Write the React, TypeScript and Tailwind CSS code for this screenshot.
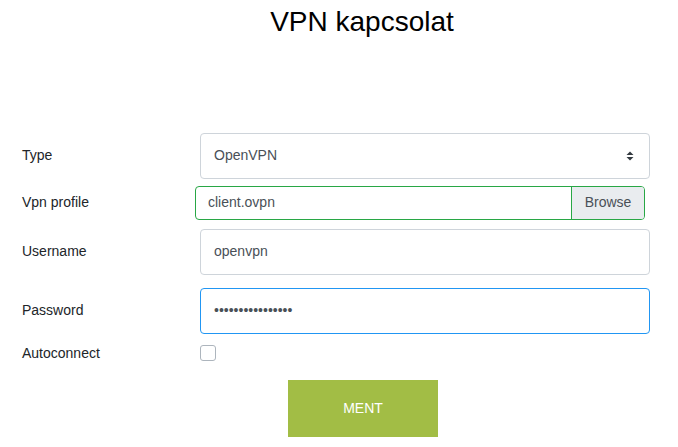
import { useState } from "react";

// ─── Row: label column + control column ───
function Row({ label, children, className = "" }: { label: string; children: React.ReactNode; className?: string }) {
  return (
    <div className={`flex items-center ${className}`}>
      <label className="w-[200px] shrink-0 pl-[22px] text-[14px] text-[#212529]">{label}</label>
      <div className="w-[450px]">{children}</div>
    </div>
  );
}

export default function App() {
  const [auto, setAuto] = useState(false);

  return (
    <div className="min-h-screen bg-white font-['Liberation_Sans',Arial,sans-serif] text-[#212529]">
      <h1 className="pt-[5px] text-center pl-[46px] text-[28px] leading-[1.2] font-normal text-black">
        VPN kapcsolat
      </h1>

      <form className="mt-[94px] flex flex-col" onSubmit={(e) => e.preventDefault()}>
        {/* Type */}
        <Row label="Type">
          <div className="relative h-[46px] rounded-[4px] border border-[#ced4da] flex items-center px-[13px] text-[14px] text-[#495057]">
            OpenVPN
            <svg className="absolute right-[15px] top-[17px]" width="8" height="10" viewBox="0 0 8 10">
              <path d="M0.5 4 L4 0.5 L7.5 4 Z" fill="#343a40" />
              <path d="M0.5 6 L4 9.5 L7.5 6 Z" fill="#343a40" />
            </svg>
          </div>
        </Row>

        {/* Vpn profile */}
        <Row label="Vpn profile" className="mt-[7px]">
          <div className="-ml-[5px] w-[450px] flex h-[34px] rounded-[4px] border border-[#28a745] text-[14px] overflow-hidden">
            <div className="flex-1 flex items-center px-[12px] text-[#495057]">client.ovpn</div>
            <div className="w-[73px] flex items-center justify-center border-l border-[#28a745] bg-[#e9ecef] text-[#495057]">
              Browse
            </div>
          </div>
        </Row>

        {/* Username */}
        <Row label="Username" className="mt-[9px]">
          <div className="h-[46px] rounded-[4px] border border-[#ced4da] flex items-center px-[13px] text-[14px] text-[#495057]">
            openvpn
          </div>
        </Row>

        {/* Password */}
        <Row label="Password" className="mt-[13px]">
          <div className="h-[46px] rounded-[4px] border border-[#2196f3] flex items-center px-[13px] text-[14px] text-[#495057]">
            ••••••••••••••••
          </div>
        </Row>

        {/* Autoconnect */}
        <Row label="Autoconnect" className="mt-[9px]">
          <button
            type="button"
            onClick={() => setAuto(!auto)}
            className={`block w-[16px] h-[16px] rounded-[3px] border ${auto ? "bg-[#007bff] border-[#007bff]" : "bg-white border-[#adb5bd]"}`}
          />
        </Row>

        <div className="mt-[16px] flex justify-center pl-[48px]">
          <button
            type="submit"
            className="w-[150px] h-[57px] bg-[#a2bd45] text-white text-[14px] uppercase"
          >
            Ment
          </button>
        </div>
      </form>
    </div>
  );
}
